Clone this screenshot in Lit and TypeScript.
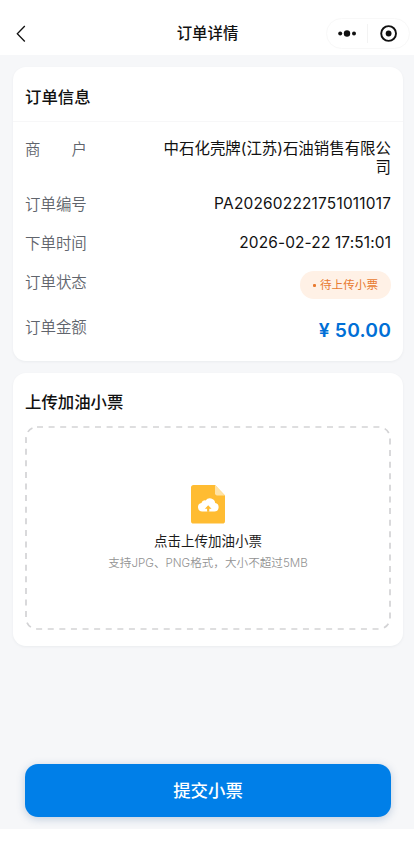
import { LitElement, html, css, svg } from "lit";
import { customElement } from "lit/decorators.js";

const backIcon = svg`<svg class="back" width="12" height="18" viewBox="0 0 12 18" fill="none"><path d="M9.800 1 2.300 8.800l7.500 7.700" stroke="#111" stroke-width="1.300"/></svg>`;

const fileIcon = svg`<svg class="file" width="34" height="39" viewBox="0 0 34 39">
  <path d="M2.600 0H24l10 10.400V36a2.600 2.600 0 0 1-2.600 2.600H2.600A2.600 2.600 0 0 1 0 36V2.600A2.600 2.600 0 0 1 2.600 0Z" fill="#ffbc32"/>
  <path d="M24 0l10 10.400h-8.200a1.800 1.800 0 0 1-1.800-1.800Z" fill="#ffe3a6"/>
  <path d="M11.200 26.500a4.300 4.300 0 0 1-.8-8.500 3.700 3.700 0 0 1 4.200-2.600 5.400 5.400 0 0 1 9.600 2.600 4.300 4.300 0 0 1-1 8.500Z" fill="#fff"/>
  <path d="M17.200 20.200l3.300 3.500h-2.200v3h-2.200v-3h-2.200Z" fill="#ffbc32"/>
</svg>`;

@customElement("app-root")
export class AppRoot extends LitElement {
  static styles = css`
    :host {
      display: flex;
      flex-direction: column;
      height: 854px;
      background: #fff;
      color: #111;
      font-family: Inter, "Noto Sans CJK SC", sans-serif;
    }
    * { box-sizing: border-box; }
    header {
      display: grid;
      grid-template-columns: 88px 1fr 88px;
      align-items: center;
      height: 55px;
      flex: none;
      padding-top: 12px;
    }
    .back { display: block; margin-left: 15px; }
    .title { text-align: center; font-size: 15.400px; line-height: 22px; font-weight: 500; padding-left: 1px; }
    .capsule {
      display: flex;
      align-items: center;
      width: 84px;
      height: 31px;
      border: 1px solid #f8f8f8;
      border-radius: 16px;
    }
    .capsule svg { display: block; }
    main {
      flex: none;
      height: 774px;
      background: #f6f7f9;
      padding: 12px 11px 0 13px;
      display: flex;
      flex-direction: column;
    }
    .card {
      background: #fff;
      border-radius: 13px;
      box-shadow: 0 1px 3px rgba(20, 30, 50, 0.05);
      flex: none;
    }
    .info { height: 293.500px; }
    .upload { height: 273px; margin-top: 12.500px; padding: 0 12px; }
    h2 { margin: 0; font-size: 16.400px; font-weight: 500; line-height: 24px; }
    .info h2 { padding: 18px 12px 12px; border-bottom: 1px solid #f7f7f8; }
    .upload h2 { padding-top: 17px; }
    .rows { padding: 17px 12px 0; }
    .row { display: flex; justify-content: space-between; align-items: flex-start; font-size: 15.450px; line-height: 20px; }
    .label { color: #60646c; font-weight: 350; margin-top: 1px; display: flex; justify-content: space-between; width: 62px; flex: none; white-space: nowrap; }
    .value { text-align: right; line-height: 19px; }
    .r1 { height: 55px; }
    .r1 .value { width: 232px; }
    .r2, .r3 { height: 39px; }
    .r2 .value { letter-spacing: 0.200px; margin-right: -0.200px; }
    .r3 .value { letter-spacing: 0.140px; margin-right: -0.140px; }
    .r4 { height: 44px; }
    .r5 .label { margin-top: 2px; }
    .tag {
      display: flex;
      align-items: center;
      justify-content: center;
      gap: 4px;
      width: 91px;
      height: 28px;
      margin-top: -1px;
      border-radius: 14px;
      background: #fff1e6;
      color: #e87a30;
      font-size: 11.600px;
    }
    .dot { width: 3px; height: 3px; border-radius: 1px; background: currentColor; }
    .price { color: #006fd6; font-weight: 600; font-size: 19.300px; line-height: 26px; margin-top: 1px; white-space: pre; letter-spacing: 0.200px; margin-right: -0.200px; }
    .drop {
      position: relative;
      margin-top: 12px;
      height: 204px;
      display: flex;
      flex-direction: column;
      align-items: center;
      padding-top: 59px;
    }
    .dash { position: absolute; inset: 0; }
    .file { display: block; }
    .hint { margin-top: 7px; font-size: 13.500px; line-height: 20px; color: #1c1c1c; }
    .sub { margin-top: 3px; font-size: 11.600px; font-weight: 350; line-height: 18px; color: #929292; white-space: nowrap; }
    .submit {
      margin: auto 0 12.500px 12px;
      width: 366px;
      height: 52.500px;
      flex: none;
      border: 0;
      padding: 0 0 2px;
      border-radius: 13px;
      background: #007fe8;
      color: #fff;
      font-family: inherit;
      font-size: 17.400px;
      font-weight: 500;
      box-shadow: 0 2px 8px rgba(30, 80, 140, 0.25);
    }
  `;

  render() {
    return html`
      <header>
        ${backIcon}
        <div class="title">订单详情</div>
        <div class="capsule">
          <svg width="82" height="29" viewBox="0 0 82 29">
            <g fill="#111"><circle cx="13.200" cy="14.500" r="2"/><circle cx="20" cy="14.500" r="3.200"/><circle cx="27" cy="14.500" r="2"/></g>
            <path d="M40.500 5v19" stroke="#f3f3f3"/>
            <circle cx="61.600" cy="14.500" r="7.400" fill="none" stroke="#111" stroke-width="1.900"/>
            <circle cx="61.600" cy="14.500" r="2.900" fill="#111"/>
          </svg>
        </div>
      </header>
      <main>
        <section class="card info">
          <h2>订单信息</h2>
          <div class="rows">
            <div class="row r1"><div class="label"><span>商</span><span>户</span></div><div class="value">中石化壳牌(江苏)石油销售有限公司</div></div>
            <div class="row r2"><div class="label">订单编号</div><div class="value">PA202602221751011017</div></div>
            <div class="row r3"><div class="label">下单时间</div><div class="value">2026-02-22 17:51:01</div></div>
            <div class="row r4"><div class="label">订单状态</div><div class="tag"><i class="dot"></i>待上传小票</div></div>
            <div class="row r5"><div class="label">订单金额</div><div class="price">¥ 50.00</div></div>
          </div>
        </section>
        <section class="card upload">
          <h2>上传加油小票</h2>
          <div class="drop">
            <svg class="dash" width="366" height="204" viewBox="0 0 366 204">
              <rect x="1" y="1" width="364" height="202" rx="11" fill="none" stroke="#d3d3d5" stroke-width="1.700" stroke-dasharray="6 5.600"/>
            </svg>
            ${fileIcon}
            <div class="hint">点击上传加油小票</div>
            <div class="sub">支持JPG、PNG格式，大小不超过5MB</div>
          </div>
        </section>
        <button class="submit">提交小票</button>
      </main>
    `;
  }
}
